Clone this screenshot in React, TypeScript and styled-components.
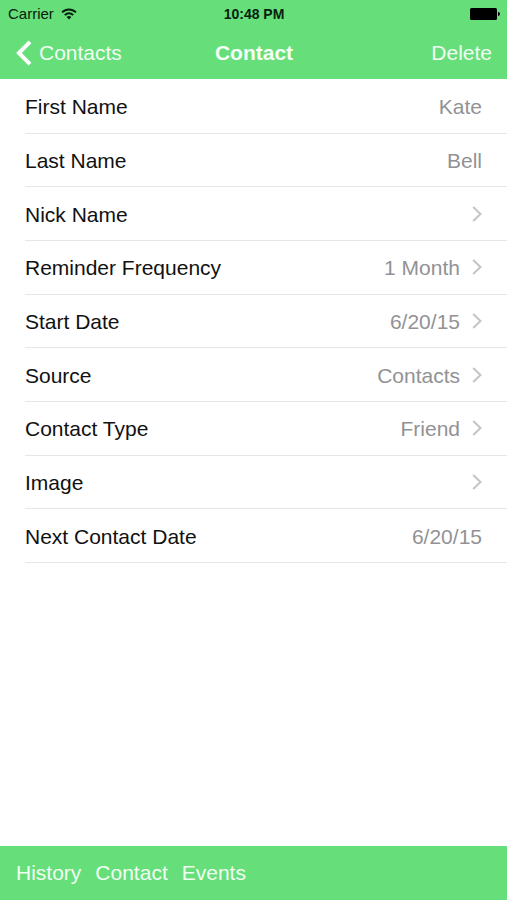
import React from "react";
import styled, { createGlobalStyle, css } from "styled-components";

const GREEN = "#66de7a";

const GlobalStyle = createGlobalStyle`
  *, *::before, *::after { box-sizing: border-box; }
  body {
    margin: 0;
    background: #fff;
    font-family: "Liberation Sans", Arial, Helvetica, sans-serif;
  }
`;

const Screen = styled.div`
  min-height: 100vh;
  display: flex;
  flex-direction: column;
  background: #fff;
  color: #000;
`;

const Header = styled.header`
  background: ${GREEN};
`;

const StatusBar = styled.div`
  display: grid;
  grid-template-columns: 1fr auto 1fr;
  align-items: center;
  height: 27px;
  padding: 0 7px 0 8px;
  line-height: 16px;
  color: #06210c;
`;

const Carrier = styled.div`
  display: flex;
  align-items: center;
  gap: 7px;
  font-size: 15px;
`;

const Clock = styled.time`
  font-size: 14px;
  font-weight: 700;
`;

const BatterySlot = styled.div`
  display: flex;
  justify-content: flex-end;
`;

const NavBar = styled.nav`
  display: grid;
  grid-template-columns: 1fr auto 1fr;
  align-items: center;
  height: 52px;
  padding: 0 15px 0 16px;
`;

const Title = styled.h1`
  margin: 0;
  font-size: 21px;
  line-height: 24px;
  font-weight: 700;
  color: #f4fff5;
`;

const BarButton = styled.button<{ $end?: boolean }>`
  display: flex;
  align-items: center;
  gap: 7px;
  justify-self: ${({ $end }) => ($end ? "end" : "start")};
  padding: 0;
  border: 0;
  background: none;
  font: inherit;
  font-size: 21px;
  line-height: 24px;
  color: #f0fff2;
  cursor: pointer;
`;

const Content = styled.main`
  flex: 1;
`;

const FieldList = styled.ul`
  display: grid;
  grid-auto-rows: 1fr;
  min-height: 484px;
  margin: 0;
  padding: 1px 0 0 25px;
  list-style: none;
`;

const FieldItem = styled.li`
  display: flex;
  border-bottom: 1px solid #e6e6e8;
`;

const rowStyle = css`
  flex: 1;
  display: flex;
  align-items: center;
  padding: 2px 25px 0 0;
  font-size: 21px;
  line-height: 24px;
  color: #111;
`;

const StaticRow = styled.div`
  ${rowStyle}
`;

const LinkRow = styled.button`
  border: 0;
  background: none;
  font-family: inherit;
  text-align: left;
  cursor: pointer;
  ${rowStyle}
`;

const Label = styled.span`
  flex: 1;
`;

const Value = styled.span`
  color: #929295;
`;

const Chevron = styled.svg`
  display: block;
  margin: 0 0 2px 12px;
`;

const Toolbar = styled.footer`
  display: flex;
  align-items: center;
  gap: 14px;
  height: 54px;
  padding: 0 16px;
  background: ${GREEN};
`;

interface Field {
  label: string;
  value?: string;
  opens?: boolean;
}

const fields: Field[] = [
  { label: "First Name", value: "Kate" },
  { label: "Last Name", value: "Bell" },
  { label: "Nick Name", opens: true },
  { label: "Reminder Frequency", value: "1 Month", opens: true },
  { label: "Start Date", value: "6/20/15", opens: true },
  { label: "Source", value: "Contacts", opens: true },
  { label: "Contact Type", value: "Friend", opens: true },
  { label: "Image", opens: true },
  { label: "Next Contact Date", value: "6/20/15" },
];

const WifiIcon = () => (
  <svg width="16" height="12" viewBox="0 0 16 12" fill="none" stroke="#06210c" strokeWidth="2" aria-hidden="true">
    <path d="M1.1 4.4C5 .4 11 .4 14.9 4.4" />
    <path d="M3.8 7.1C6.2 4.7 9.8 4.7 12.2 7.1" />
    <path d="M8 11.4 5.6 9C7 7.7 9 7.7 10.4 9Z" fill="#06210c" stroke="none" />
  </svg>
);

const BatteryIcon = () => (
  <svg width="30" height="12" viewBox="0 0 30 12" fill="#000" role="img" aria-label="Battery full">
    <rect x="0" y="0" width="27" height="12" rx="1.5" />
    <path d="M28 4c1.3.1 1.9.9 1.9 2s-.6 1.9-1.9 2Z" />
  </svg>
);

const BackIcon = () => (
  <svg width="16" height="26" viewBox="0 0 16 26" fill="none" stroke="#fff" strokeWidth="4" aria-hidden="true">
    <path d="M14 1.8 2.9 13 14 24.2" />
  </svg>
);

const FieldRow = ({ label, value, opens }: Field) => {
  const content = (
    <>
      <Label>{label}</Label>
      {value && <Value>{value}</Value>}
      {opens && (
        <Chevron width="10" height="16" viewBox="0 0 10 16" fill="none" stroke="#c4c4c8" strokeWidth="2" aria-hidden="true">
          <path d="M1.2 1 8.5 8 1.2 15" />
        </Chevron>
      )}
    </>
  );
  return (
    <FieldItem>
      {opens ? <LinkRow type="button">{content}</LinkRow> : <StaticRow>{content}</StaticRow>}
    </FieldItem>
  );
};

export default function App() {
  return (
    <Screen>
      <GlobalStyle />
      <Header>
        <StatusBar>
          <Carrier>
            Carrier
            <WifiIcon />
          </Carrier>
          <Clock>10:48 PM</Clock>
          <BatterySlot>
            <BatteryIcon />
          </BatterySlot>
        </StatusBar>
        <NavBar>
          <BarButton type="button">
            <BackIcon />
            Contacts
          </BarButton>
          <Title>Contact</Title>
          <BarButton type="button" $end>
            Delete
          </BarButton>
        </NavBar>
      </Header>
      <Content>
        <FieldList>
          {fields.map((field) => (
            <FieldRow key={field.label} {...field} />
          ))}
        </FieldList>
      </Content>
      <Toolbar>
        <BarButton type="button">History</BarButton>
        <BarButton type="button">Contact</BarButton>
        <BarButton type="button">Events</BarButton>
      </Toolbar>
    </Screen>
  );
}
